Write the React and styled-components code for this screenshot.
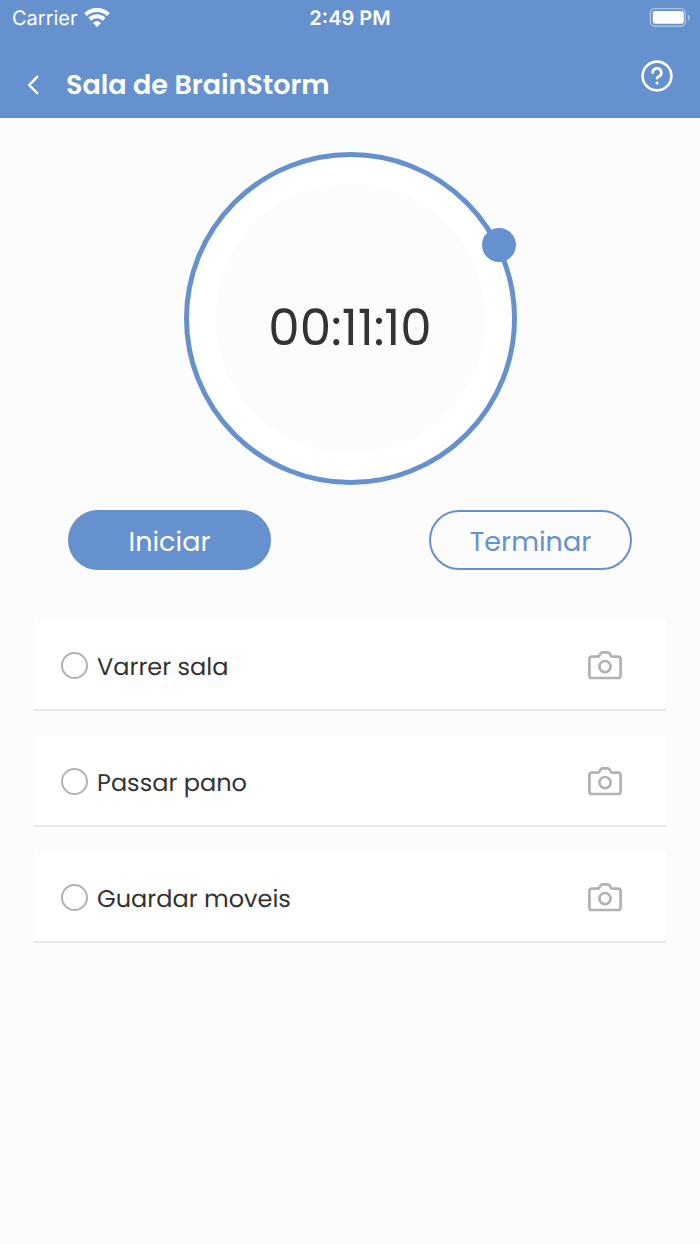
import React, { useState } from "react";
import styled, { createGlobalStyle } from "styled-components";
import { PiCaretLeftBold } from "react-icons/pi";

const GlobalStyle = createGlobalStyle`
  * {
    box-sizing: border-box;
  }

  body {
    margin: 0;
    background: #fcfcfc;
    color: #333333;
    font-family: Poppins, Inter, sans-serif;
    text-rendering: geometricPrecision;
  }

  button {
    font-family: inherit;
    cursor: pointer;
  }
`;

const PageContainer = styled.div`
  min-height: 100vh;
`;

const Header = styled.header`
  background: #6591ce;
  color: #ffffff;
`;

const StatusBar = styled.div`
  display: grid;
  grid-template-columns: 1fr auto 1fr;
  align-items: center;
  height: 36px;
  padding: 0 9px;
  font-family: Inter, sans-serif;
  font-size: 20px;
  line-height: 24px;
`;

const Carrier = styled.div`
  display: flex;
  align-items: center;
  gap: 6px;
  padding-left: 3px;
`;

const Clock = styled.time`
  font-weight: 600;
`;

const Battery = styled.svg`
  justify-self: end;
`;

const NavBar = styled.nav`
  display: flex;
  align-items: center;
  height: 82px;
  padding: 0 27px 0 21px;
`;

const IconButton = styled.button`
  display: flex;
  padding: 0;
  border: 0;
  background: transparent;
  color: ${({ $color }) => $color || "inherit"};
`;

const BackButton = styled(IconButton)`
  margin-top: 16px;
`;

const HelpButton = styled(IconButton)`
  margin-bottom: 2px;
`;

const Title = styled.h1`
  flex: 1;
  margin: 18px 0 0 19px;
  font-size: 27px;
  font-weight: 600;
  line-height: 36px;
`;

const Content = styled.main`
  padding: 32px 34px;
`;

const Dial = styled.div`
  display: grid;
  place-items: center;
  margin-bottom: 24px;

  > * {
    grid-area: 1 / 1;
  }
`;

const Time = styled.div`
  padding-top: 20px;
  font-size: 50px;
  line-height: 60px;
`;

const Actions = styled.div`
  display: flex;
  justify-content: space-between;
  gap: 24px;
  padding: 0 34px;
  margin-bottom: 50px;
`;

const ActionButton = styled.button`
  width: 203px;
  height: 60px;
  padding: 4px 0 0;
  border: 2px solid #6591ce;
  border-radius: 30px;
  background: ${({ $filled }) => ($filled ? "#6591ce" : "transparent")};
  color: ${({ $filled }) => ($filled ? "#ffffff" : "#6591ce")};
  font-size: 27px;
`;

const TaskList = styled.ul`
  display: grid;
  gap: 25px;
  margin: 0;
  padding: 0;
  list-style: none;
`;

const Task = styled.li`
  display: flex;
  align-items: center;
  justify-content: space-between;
  height: 91px;
  padding: 2px 44px 0 27px;
  border-bottom: 2px solid #e8e8e8;
  background: #ffffff;
`;

const TaskLabel = styled.label`
  display: flex;
  align-items: center;
  gap: 9px;
  font-size: 24px;
  line-height: 32px;
  cursor: pointer;
`;

const TaskName = styled.span`
  padding-top: 4px;
`;

const Check = styled.input`
  appearance: none;
  width: 27px;
  height: 27px;
  margin: 0;
  border: 2px solid #b2b2b2;
  border-radius: 50%;

  &:checked {
    border-color: #6591ce;
    background: #6591ce;
  }
`;

const WifiIcon = () => (
  <svg width="26" height="20" viewBox="0 1 26 20" aria-hidden="true">
    <g fill="none" stroke="#ffffff" strokeWidth="4">
      <path d="M1.6 7.6C8 1.4 18 1.4 24.4 7.6" />
      <path d="M5.8 12.2C10 8.2 16 8.2 20.2 12.2" />
    </g>
    <path d="M9 16C11.2 13.8 14.8 13.8 17 16L13 20Z" fill="#ffffff" />
  </svg>
);

const BatteryIcon = () => (
  <Battery width="42" height="20" viewBox="0 1 42 20" aria-hidden="true">
    <rect
      x="1.4"
      y="1.6"
      width="35"
      height="17.6"
      rx="4.5"
      fill="none"
      stroke="#a9c2e4"
      strokeWidth="1.4"
    />
    <rect x="3.8" y="4" width="31" height="12.8" rx="2.4" fill="#ffffff" />
    <path d="M39 7.4C41.4 8.4 41.4 12.4 39 13.4Z" fill="#a9c2e4" />
  </Battery>
);

const HelpIcon = () => (
  <svg
    width="32"
    height="32"
    viewBox="0 0 32 32"
    fill="none"
    stroke="currentColor"
    strokeWidth="2.6"
    strokeLinecap="round"
    aria-hidden="true"
  >
    <circle cx="16" cy="16" r="14.4" />
    <path d="M11.7 12.6a4.3 4.3 0 1 1 6.2 3.9C16.6 17.1 16 17.4 16 18.2" />
    <circle cx="16" cy="22.9" r="1.5" fill="currentColor" stroke="none" />
  </svg>
);

const CameraIcon = () => (
  <svg
    width="34"
    height="29"
    viewBox="0 0 34 29"
    fill="none"
    stroke="currentColor"
    strokeWidth="2.7"
    strokeLinejoin="round"
    aria-hidden="true"
  >
    <path d="M4 5.7H9.6C10.3 5.7 10.7 5.5 11.1 4.9L12.7 2.3C13.1 1.6 13.5 1.4 14.2 1.4H19.8C20.5 1.4 20.9 1.6 21.3 2.3L22.9 4.9C23.3 5.5 23.7 5.7 24.4 5.7H30A2.6 2.6 0 0 1 32.6 8.3V24.4A2.6 2.6 0 0 1 30 27H4A2.6 2.6 0 0 1 1.4 24.4V8.3A2.6 2.6 0 0 1 4 5.7Z" />
    <circle cx="17" cy="15.6" r="5.6" />
  </svg>
);

const DialRing = () => (
  <svg width="338" height="336" viewBox="0 0 338 336" aria-hidden="true">
    <circle
      cx="169.5"
      cy="168.5"
      r="164"
      fill="#ffffff"
      stroke="#6591ce"
      strokeWidth="5"
    />
    <circle cx="169.5" cy="168.5" r="135" fill="#fcfcfc" />
    <circle cx="318" cy="95" r="17" fill="#6591ce" />
  </svg>
);

const initialTasks = [
  { id: 1, name: "Varrer sala", done: false },
  { id: 2, name: "Passar pano", done: false },
  { id: 3, name: "Guardar moveis", done: false },
];

const App = () => {
  const [tasks, setTasks] = useState(initialTasks);

  const toggleTask = (id) => {
    setTasks(
      tasks.map((task) =>
        task.id === id ? { ...task, done: !task.done } : task
      )
    );
  };

  return (
    <PageContainer>
      <GlobalStyle />
      <Header>
        <StatusBar>
          <Carrier>
            Carrier
            <WifiIcon />
          </Carrier>
          <Clock>2:49 PM</Clock>
          <BatteryIcon />
        </StatusBar>
        <NavBar>
          <BackButton aria-label="Voltar">
            <PiCaretLeftBold size={26} />
          </BackButton>
          <Title>Sala de BrainStorm</Title>
          <HelpButton aria-label="Ajuda">
            <HelpIcon />
          </HelpButton>
        </NavBar>
      </Header>

      <Content>
        <Dial>
          <DialRing />
          <Time>00:11:10</Time>
        </Dial>

        <Actions>
          <ActionButton $filled>Iniciar</ActionButton>
          <ActionButton>Terminar</ActionButton>
        </Actions>

        <TaskList>
          {tasks.map((task) => (
            <Task key={task.id}>
              <TaskLabel>
                <Check
                  type="checkbox"
                  checked={task.done}
                  onChange={() => toggleTask(task.id)}
                />
                <TaskName>{task.name}</TaskName>
              </TaskLabel>
              <IconButton $color="#b2b2b2" aria-label={`Foto: ${task.name}`}>
                <CameraIcon />
              </IconButton>
            </Task>
          ))}
        </TaskList>
      </Content>
    </PageContainer>
  );
};

export default App;
